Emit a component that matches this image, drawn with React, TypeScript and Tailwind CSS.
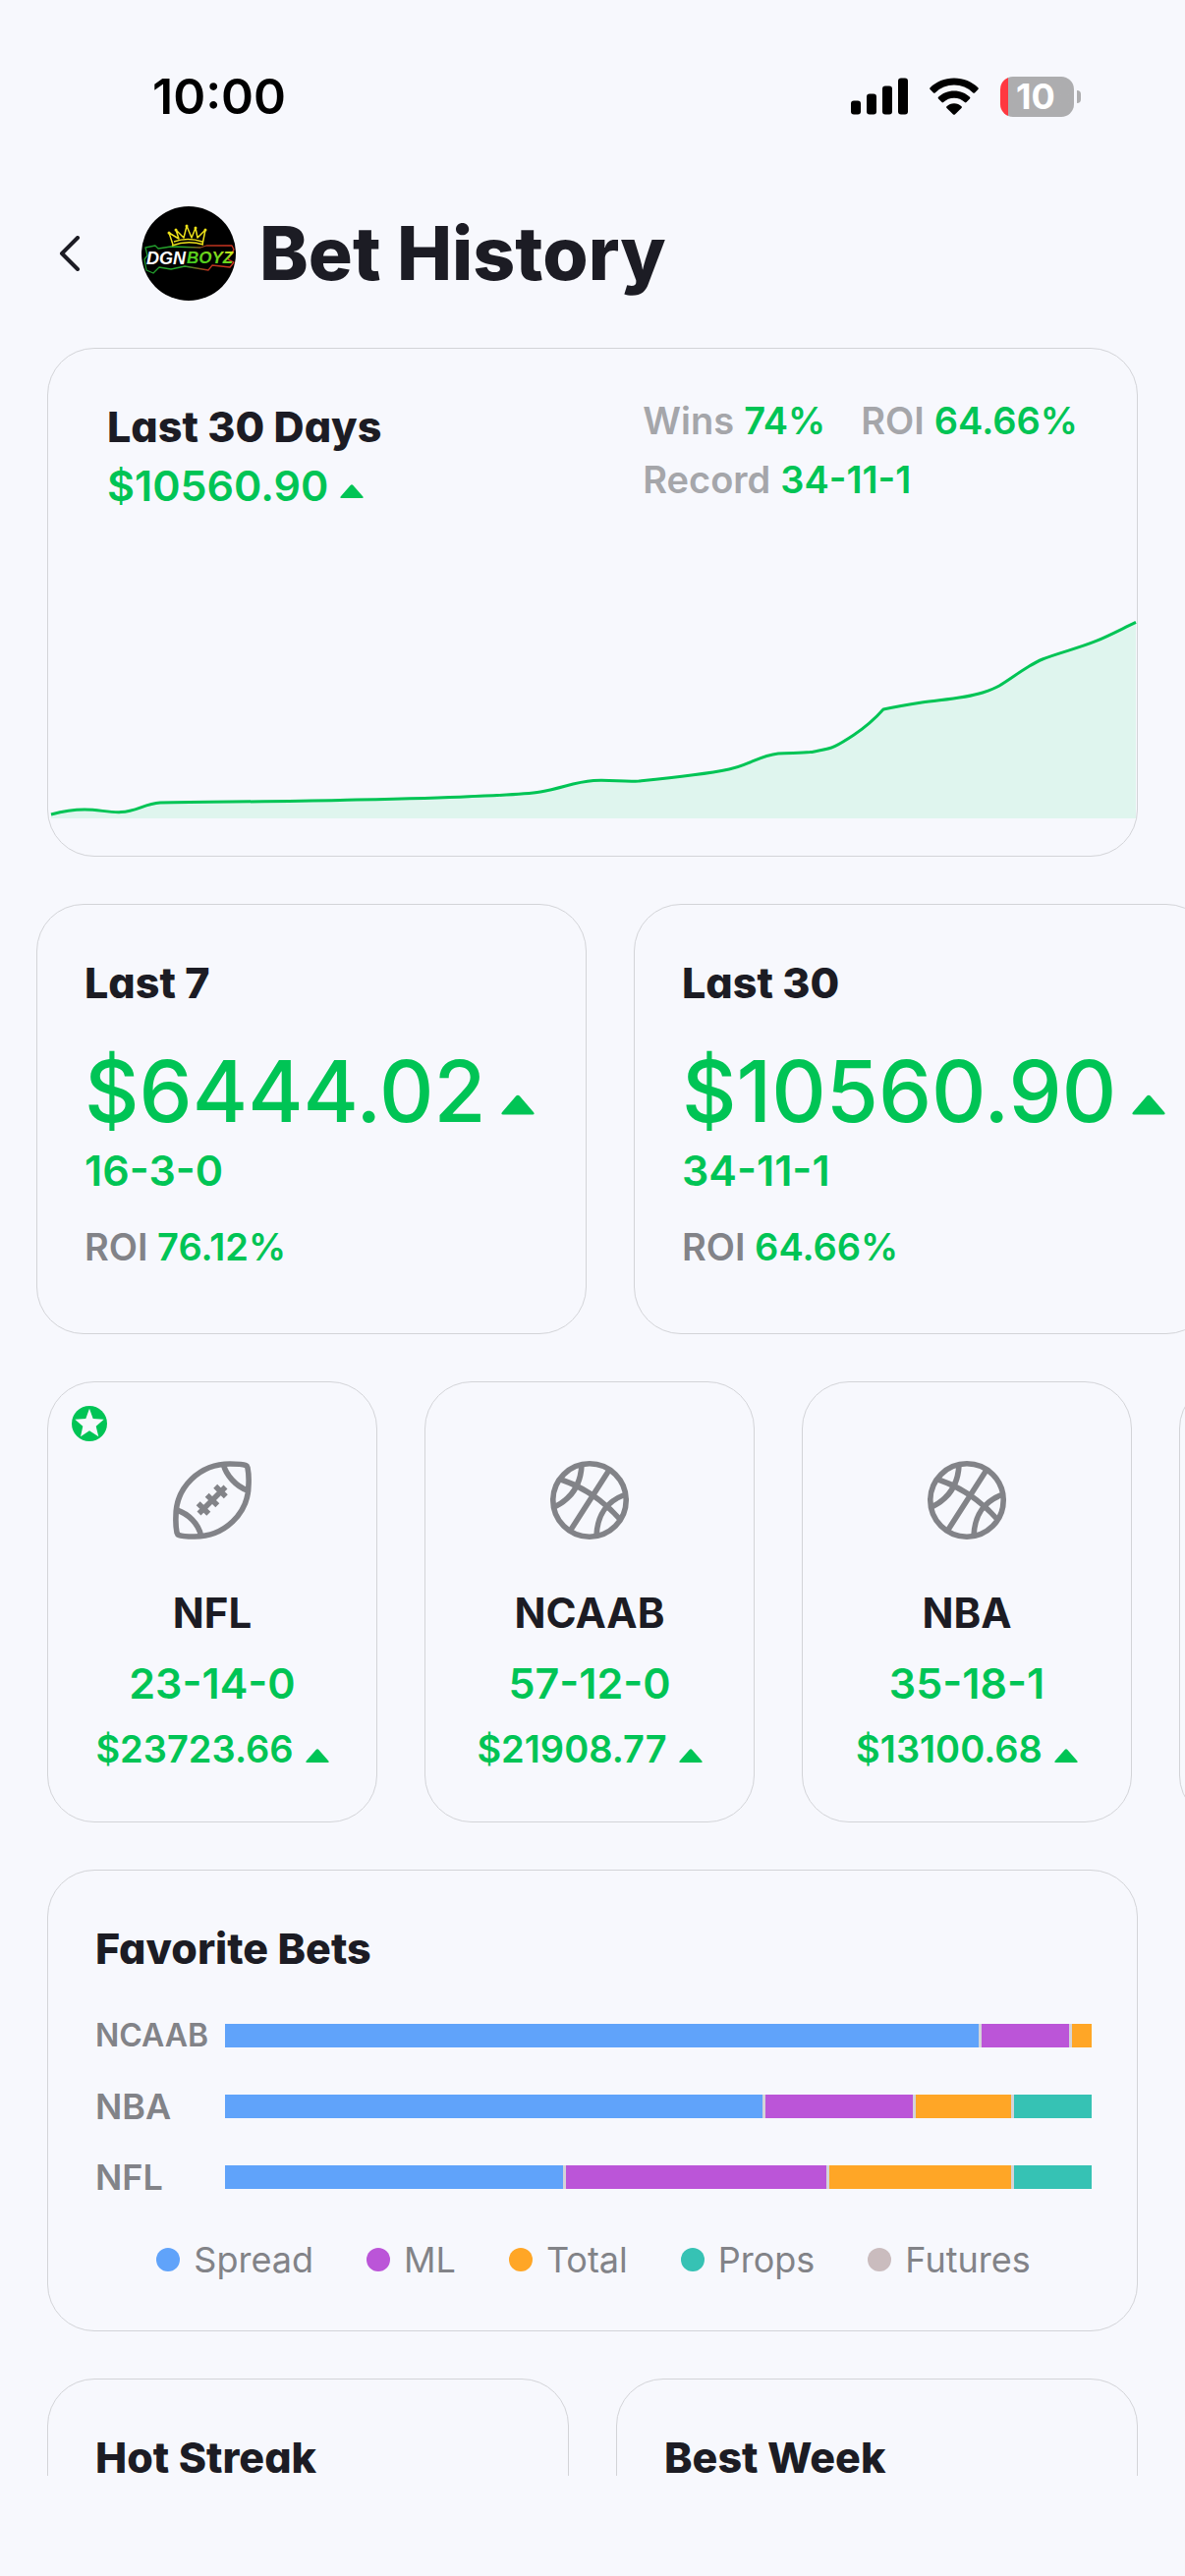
import { clsx } from 'clsx';

const sports = [
  { league: 'NFL', record: '23-14-0', profit: '$23723.66', icon: 'football', best: true },
  { league: 'NCAAB', record: '57-12-0', profit: '$21908.77', icon: 'basketball', best: false },
  { league: 'NBA', record: '35-18-1', profit: '$13100.68', icon: 'basketball', best: false },
];

const periods = [
  { title: 'Last 7', profit: '$6444.02', record: '16-3-0', roi: '76.12%' },
  { title: 'Last 30', profit: '$10560.90', record: '34-11-1', roi: '64.66%' },
];

const betTypes = [
  { name: 'Spread', color: 'bg-[#60a3fa]' },
  { name: 'ML', color: 'bg-[#bb55d8]' },
  { name: 'Total', color: 'bg-[#ffa626]' },
  { name: 'Props', color: 'bg-[#36c2b4]' },
  { name: 'Futures', color: 'bg-[#cabcbe]' },
];

// shares per league, same order as betTypes
const favorites = [
  { league: 'NCAAB', shares: [767, 89, 20], small: true },
  { league: 'NBA', shares: [547, 150, 97, 79], small: false },
  { league: 'NFL', shares: [344, 265, 185, 79], small: false },
];

const CARD = 'rounded-[48px] border border-[#d3d4d8]';
const TITLE = "text-[43px] leading-[60px] font-extrabold text-[#1c1c24] [font-feature-settings:'cv11']";

function UpArrow({ className }: { className?: string }) {
  return (
    <svg viewBox="0 0 24 14" className={clsx('shrink-0', className)} fill="currentColor" aria-hidden="true">
      <path d="M10.6 0.9Q12-0.6 13.4 0.9L23.4 12.4Q24.4 14 22.6 14H1.4Q-0.4 14 0.6 12.4Z" />
    </svg>
  );
}

function StatusBar() {
  return (
    <div className="flex h-[68px] items-center justify-between pr-[106px] pl-[155px] text-black">
      <span className="text-[50px] leading-[60px] font-semibold">10:00</span>
      <div className="flex items-center gap-[22px]">
        <svg viewBox="0 0 58 38" className="h-[38px] w-[58px]" aria-hidden="true">
          <rect x="0" y="23.5" width="10" height="14" rx="3" />
          <rect x="16" y="16.5" width="10" height="21" rx="3" />
          <rect x="32" y="8.5" width="10" height="29" rx="3" />
          <rect x="48" y="0.5" width="10" height="37" rx="3" />
        </svg>
        <svg viewBox="0 0 50 38" className="h-[38px] w-[50px]" aria-hidden="true">
          <path d="M25 0.5C34.6 0.5 43.3 4.2 49.4 10.2Q50.3 11.1 49.4 12L46 15.4Q45.2 16.2 44.3 15.4A27.6 27.6 0 0 0 5.7 15.4Q4.8 16.2 4 15.4L0.6 12Q-0.3 11.1 0.6 10.2C6.7 4.2 15.4 0.5 25 0.5Z" />
          <path d="M25 13.4C31.3 13.4 36.9 15.8 41 19.7Q41.9 20.6 41 21.5L37.5 25Q36.7 25.8 35.8 25A15.8 15.8 0 0 0 14.2 25Q13.3 25.8 12.5 25L9 21.5Q8.1 20.6 9 19.7C13.1 15.8 18.7 13.4 25 13.4Z" />
          <path d="M25 26.3C27.9 26.3 30.5 27.4 32.5 29.2Q33.4 30.1 32.5 31L25.9 37.4Q25 38.2 24.1 37.4L17.5 31Q16.6 30.1 17.5 29.2C19.5 27.4 22.1 26.3 25 26.3Z" />
        </svg>
        <div className="flex items-center gap-[3px]">
          <div className="flex h-[41px] w-[75px] items-center justify-center rounded-[13px] bg-linear-to-r from-[#ff3840] from-[8px] to-[#adadaf] to-[8px] pr-[3px] text-[36px] leading-[41px] font-bold text-white">
            10
          </div>
          <div className="h-[13px] w-[4px] rounded-r-full bg-[#adadaf]" />
        </div>
      </div>
    </div>
  );
}

function Avatar() {
  return (
    <svg viewBox="0 0 96 96" className="size-24 shrink-0" role="img" aria-label="DGN Boyz">
      <defs>
        <linearGradient id="boyz" x1="0" x2="1" y1="1" y2="0">
          <stop offset="0" stopColor="#2fc41f" />
          <stop offset="0.6" stopColor="#6fd61d" />
          <stop offset="1" stopColor="#f2f01a" />
        </linearGradient>
        <linearGradient id="glow" x1="0" x2="1">
          <stop offset="0" stopColor="#1f9a2c" />
          <stop offset="0.45" stopColor="#2ba82a" />
          <stop offset="0.7" stopColor="#b3321c" />
          <stop offset="1" stopColor="#d13422" />
        </linearGradient>
      </defs>
      <circle cx="48" cy="48" r="48" fill="#000" />
      <path
        d="M4 42L14 40L17 43L30 41L60 42L66 40L92 40L94 44L88 54L94 57L90 62L72 60L68 65L44 61L30 64L18 62L12 68L5 65L3 54L6 50Z"
        fill="none"
        stroke="url(#glow)"
        strokeWidth="1.3"
        strokeLinejoin="round"
      />
      <g fill="none" stroke="#ece019" strokeWidth="1.5" strokeLinejoin="round">
        <path d="M32 39L28 27L38 33L35 24L43 32L46 20L51 32L55 22L57 32L65 24L62 39" />
        <path d="M31 40Q47 34 63 39M33 36Q47 31 62 36" />
      </g>
      <g fill="#ece019">
        <circle cx="28" cy="27" r="1.5" />
        <circle cx="35" cy="24" r="1.5" />
        <circle cx="46" cy="20" r="1.5" />
        <circle cx="55" cy="22" r="1.5" />
        <circle cx="65" cy="24" r="1.5" />
      </g>
      <g fontFamily="'Liberation Sans', sans-serif" fontWeight="700" fontStyle="italic">
        <text x="5" y="59" fontSize="18" fill="#fff">
          DGN
        </text>
        <text x="46" y="58" fontSize="17" fill="url(#boyz)">
          BOYZ
        </text>
      </g>
    </svg>
  );
}

function SportIcon({ name }: { name: string }) {
  return (
    <svg viewBox="0 0 80 80" className="size-20 text-[#828388]" fill="none" stroke="currentColor" strokeWidth="5.6" aria-hidden="true">
      {name === 'football' ? (
        <>
          <path d="M58 3C66 3 72 3.5 74 4.5Q75.5 5 76 7C77 12 77.3 18 77 24C77 54 52 77 22 77C14 77 8 76.5 6 75.5Q4.5 75 4 73C3 68 2.7 62 3 56C3 26 28 3 58 3Z" />
          <path d="M51.5 4C54 14 64 26 76 30M4 50C16 54 26 64 28.5 76" />
          <path d="M26.5 53.5L53.5 26.5M25.7 43.2L36.3 53.8M34.7 34.7L45.3 45.3M43.2 25.7L53.8 36.3" />
        </>
      ) : (
        <>
          <circle cx="40" cy="40" r="37.2" />
          <path d="M59.5 10L21 70M11 19Q46 31 71.5 60M32 4C31 25 22 38 5 46.5M75.5 34.5C56 42 48 56 47 76" />
        </>
      )}
    </svg>
  );
}

function StarBadge() {
  return (
    <svg viewBox="0 0 36 36" className="absolute top-6 left-6 size-9" role="img" aria-label="Best sport">
      <circle cx="18" cy="18" r="18" fill="#00c455" />
      <path
        d="M18 2.7L21.7 13L32.7 13.7L24.7 20.7L27.3 31.3L18 25.3L9 31.3L11.3 20.7L3.3 13.7L14.3 13Z"
        fill="#f7f8fd"
      />
    </svg>
  );
}

function ProfitCard() {
  const line =
    'M3 201C14 198 24 196 37 196C52 196 60 199 74 198.6C90 198 98 190 114 189C170 188 230 188 297 186.5C340 185.5 390 184.5 428 182.7C455 181.5 482 181 501 178C524 174 535 168 555 166.5C572 165.5 586 168 601 167C632 164 664 161 693 155C713 151 724 141 743 139C754 138 765 139 775.5 137.6C785 136 794 135 801 131.4C808 128 814 124 820 120C832 112 842 103 850 94C864 91 876 89 889 87C910 84 932 83 951 77C957 75 963 73 968 70C978 64 987 57 997 51C1002 48 1006 45.5 1012 43C1030 36 1048 32 1066 24.7C1080 19 1093 12 1107 5.4';
  return (
    <section className={clsx(CARD, 'mx-12 overflow-hidden pb-[37px]')}>
      <div className="flex justify-between px-[60px] pt-[43px]">
        <div className="pt-1.5">
          <h2 className={TITLE}>Last 30 Days</h2>
          <p className="flex items-baseline gap-3 text-[43px] leading-[60px] font-semibold text-[#00c455]">
            $10560.90
            <UpArrow className="h-[17px] w-6 pb-[3px]" />
          </p>
        </div>
        <dl className="text-[38px] leading-[60px] font-semibold">
          <div className="flex gap-9">
            <div className="flex gap-2.5">
              <dt className="text-[#a5a6aa]">Wins</dt>
              <dd className="text-[#00c455]">74%</dd>
            </div>
            <div className="flex gap-2.5">
              <dt className="text-[#a5a6aa]">ROI</dt>
              <dd className="text-[#00c455]">64.66%</dd>
            </div>
          </div>
          <div className="flex gap-2.5">
            <dt className="text-[#a5a6aa]">Record</dt>
            <dd className="text-[#00c455]">34-11-1</dd>
          </div>
        </dl>
      </div>
      <svg viewBox="0 0 1108 206" preserveAspectRatio="none" className="mt-[104px] block h-[206px] w-full" role="img" aria-label="Profit over the last 30 days">
        <path d={`${line}V205H3Z`} fill="#dff5ee" />
        <path d={line} fill="none" stroke="#00c455" strokeWidth="3" />
      </svg>
    </section>
  );
}

export default function App() {
  return (
    <div className="flex h-screen flex-col overflow-hidden bg-[#f7f8fd] pt-16 font-['Inter',sans-serif]">
      <StatusBar />

      <header className="mt-[78px] flex items-center pl-[48px]">
        <button type="button" aria-label="Back" className="flex h-20 w-24 items-center pl-3 text-[#1c1c24]">
          <svg viewBox="0 0 22 36" className="h-9 w-[22px]" fill="none" stroke="currentColor" strokeWidth="4" strokeLinecap="round" strokeLinejoin="round">
            <path d="M19 2L3 18L19 34" />
          </svg>
        </button>
        <Avatar />
        <h1 className="ml-6 text-[75px] leading-[96px] font-extrabold text-[#1c1c24] [font-feature-settings:'cv11']">Bet History</h1>
      </header>

      <main className="mt-12 flex min-h-0 flex-1 flex-col gap-12 overflow-y-auto [scrollbar-width:none] *:shrink-0">
        <ProfitCard />

        <div className="flex gap-12 overflow-x-auto pl-[37px] [scrollbar-width:none]">
          {periods.map((p) => (
            <section key={p.title} className={clsx(CARD, 'min-w-[560px] shrink-0 px-12 pt-[49px] pb-[58px]')}>
              <h2 className={TITLE}>{p.title}</h2>
              <p className="mt-[39px] flex items-baseline gap-4 text-[86px] leading-[84px] font-medium text-[#00c455]">
                {p.profit}
                <UpArrow className="h-[28px] w-[34px] pb-[7px]" />
              </p>
              <p className="mt-2 text-[43px] leading-[60px] font-semibold text-[#00c455]">{p.record}</p>
              <p className="mt-[18px] text-[38px] leading-[60px] font-semibold text-[#00c455]">
                <span className="text-[#828388]">ROI</span> {p.roi}
              </p>
            </section>
          ))}
        </div>

        <div className="flex gap-12 overflow-x-auto pl-12 [scrollbar-width:none]">
          {sports.map((s) => (
            <section
              key={s.league}
              className={clsx(CARD, 'relative flex w-[336px] shrink-0 flex-col items-center pt-20 pb-[44px] font-semibold text-[#00c455]')}
            >
              {s.best ? <StarBadge /> : null}
              <SportIcon name={s.icon} />
              <h2 className="mt-[45px] text-[42px] leading-[60px] font-bold text-[#1c1c24]">{s.league}</h2>
              <p className="mt-[11px] text-[43px] leading-[60px]">{s.record}</p>
              <p className="mt-[7px] flex items-baseline gap-3 text-[38px] leading-[60px]">
                {s.profit}
                <UpArrow className="h-[14px] w-6" />
              </p>
            </section>
          ))}
          <section className={clsx(CARD, 'w-[336px] shrink-0')} aria-hidden="true" />
        </div>

        <section className={clsx(CARD, 'mx-12 pt-[49px] pr-[46px] pb-[42px] pl-12')}>
          <h2 className={TITLE}>Favorite Bets</h2>
          <div className="mt-[23px]">
            {favorites.map((f) => (
              <div key={f.league} className="flex h-[72px] items-center">
                <span className={clsx('w-[132px] shrink-0 font-semibold text-[#828388]', f.small ? 'text-[32px]' : 'text-[36px]')}>
                  {f.league}
                </span>
                <div className="flex h-6 flex-1 gap-[3px] bg-[#d3d4d8]">
                  {f.shares.map((share, i) => (
                    <div key={betTypes[i].name} className={clsx('basis-0', betTypes[i].color)} style={{ flexGrow: share }} />
                  ))}
                </div>
              </div>
            ))}
          </div>
          <ul className="mt-[18px] flex justify-center gap-[54px] text-[36px] leading-[60px] text-[#828388]">
            {betTypes.map((t) => (
              <li key={t.name} className="flex items-center gap-3.5">
                <span className={clsx('size-6 rounded-full', t.color)} />
                {t.name}
              </li>
            ))}
          </ul>
        </section>

        <div className="mx-12 grid grid-cols-2 gap-12">
          <section className={clsx(CARD, 'h-[300px] px-12 pt-[49px]')}>
            <h2 className={TITLE}>Hot Streak</h2>
          </section>
          <section className={clsx(CARD, 'h-[300px] px-12 pt-[49px]')}>
            <h2 className={TITLE}>Best Week</h2>
          </section>
        </div>
      </main>

      <div className="h-[102px] shrink-0" />
    </div>
  );
}
